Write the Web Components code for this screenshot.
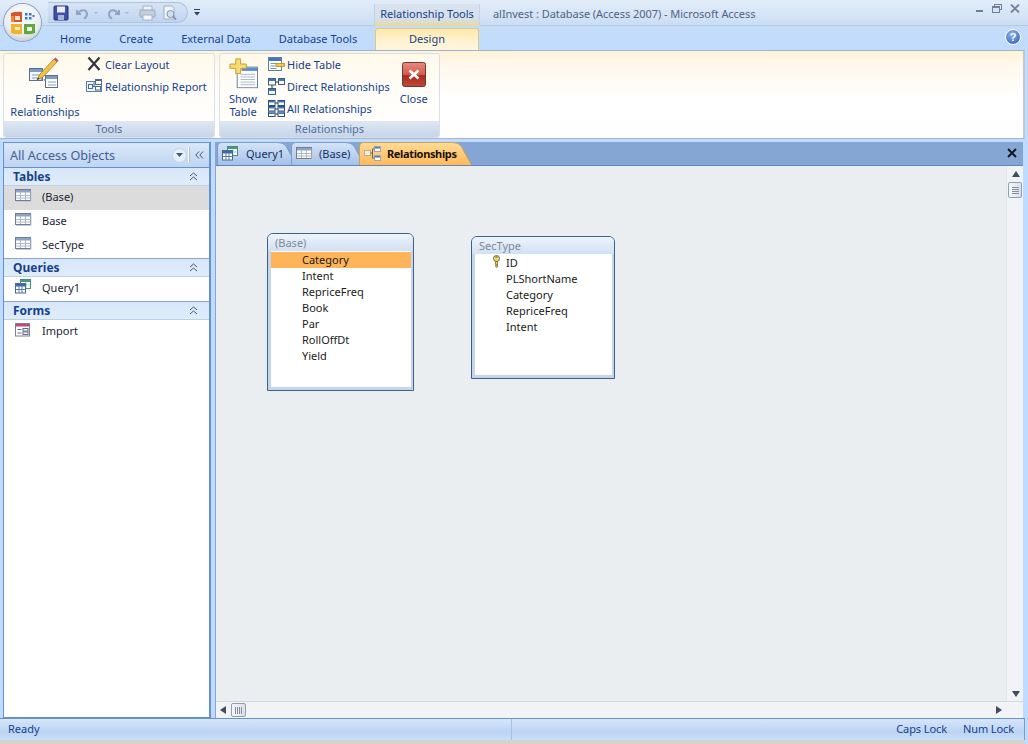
<!DOCTYPE html>
<html>
<head>
<meta charset="utf-8">
<style>
  html, body { margin: 0; height: 100%; overflow: hidden; }
  body { width: 1028px; height: 744px; background: #bfdbff; font: 11px "Noto Sans", "Open Sans", sans-serif; color: #15428b; display: flex; flex-direction: column; }
  .main { flex: 1; display: flex; min-height: 0; padding: 3px 0 0 3px; }
  .col { display: flex; flex-direction: column; margin-top: -1px; }
</style>
</head>
<body>
<access-titlebar></access-titlebar>
<access-tabstrip></access-tabstrip>
<access-ribbon>
  <ribbon-group label="Tools" style="width:212px">
    <ribbon-big icon="edit" style="width:82px">Edit<br>Relationships</ribbon-big>
    <div class="col">
      <ribbon-small icon="clear">Clear Layout</ribbon-small>
      <ribbon-small icon="report">Relationship Report</ribbon-small>
    </div>
  </ribbon-group>
  <ribbon-group label="Relationships" style="width:221px">
    <ribbon-big icon="show" style="width:48px;padding-right:2px">Show<br>Table</ribbon-big>
    <div class="col">
      <ribbon-small icon="hide" style="gap:2px">Hide Table</ribbon-small>
      <ribbon-small icon="direct" style="gap:2px">Direct Relationships</ribbon-small>
      <ribbon-small icon="all" style="gap:2px">All Relationships</ribbon-small>
    </div>
    <ribbon-big icon="close" style="width:48px">Close</ribbon-big>
  </ribbon-group>
</access-ribbon>
<div class="main">
  <nav-pane>
    <nav-group label="Tables">
      <nav-item icon="table" selected>(Base)</nav-item>
      <nav-item icon="table">Base</nav-item>
      <nav-item icon="table">SecType</nav-item>
    </nav-group>
    <nav-group label="Queries">
      <nav-item icon="query">Query1</nav-item>
    </nav-group>
    <nav-group label="Forms">
      <nav-item icon="form">Import</nav-item>
    </nav-group>
  </nav-pane>
  <doc-area>
    <doc-tab slot="tabs" icon="query" w="80" style="gap:8px">Query1</doc-tab>
    <doc-tab slot="tabs" icon="table" w="74">(Base)</doc-tab>
    <doc-tab slot="tabs" icon="rel" active w="113">Relationships</doc-tab>
    <table-box label="(Base)" style="left:51px;top:67px;width:147px;height:158px" selected="Category"
      fields="Category,Intent,RepriceFreq,Book,Par,RollOffDt,Yield"></table-box>
    <table-box label="SecType" style="left:255px;top:70px;width:144px;height:143px" keyfield="ID"
      fields="ID,PLShortName,Category,RepriceFreq,Intent"></table-box>
  </doc-area>
</div>
<access-status></access-status>

<script>
// shared icon drawings, all on a small pixel grid
const ICONS = {
  table: `<svg width="17" height="13" viewBox="0 0 17 13"><rect x=".5" y=".5" width="15" height="11" fill="#fff" stroke="#6d7f96"/><rect x="1" y="1" width="14" height="2.5" fill="#8ea4c4"/><path d="M1 6.5h14M1 9h14M5.5 3v8M10.5 3v8" stroke="#a9b8cc" fill="none"/><path d="M1 12.5h15v-11" stroke="#c4ccd8" fill="none"/></svg>`,
  query: `<svg width="16" height="15" viewBox="0 0 16 15"><rect x="5.5" y=".5" width="10" height="9" fill="#fff" stroke="#4d8a80"/><rect x="6" y="1" width="9" height="2" fill="#3f9a86"/><path d="M11 3v6M7 6h8" stroke="#9db" fill="none"/><rect x=".5" y="4.5" width="10" height="9.5" fill="#fff" stroke="#4a6a94"/><rect x="1" y="5" width="9" height="2.5" fill="#3c6aa8"/><path d="M1 10.5h9M4 7v7M7 7v7" stroke="#5b7cae" fill="none"/></svg>`,
  form: `<svg width="15" height="14" viewBox="0 0 15 14"><rect x=".5" y=".5" width="14" height="12.5" fill="#fff" stroke="#7a7f92"/><rect x="1" y="1" width="13" height="2.5" fill="#c2487e"/><rect x="8" y="5.5" width="5" height="2.5" fill="#fff" stroke="#5a6d88"/><rect x="8" y="9" width="5" height="2.5" fill="#fff" stroke="#5a6d88"/><path d="M2.500 6.500h4M2.500 10h4" stroke="#5a6d88"/></svg>`,
  rel: `<svg width="17" height="15" viewBox="0 0 17 15"><rect x=".5" y="4.500" width="6" height="5" fill="#f4ecd8" stroke="#b9ab8c"/><rect x="10.500" y=".5" width="6" height="5" fill="#fff" stroke="#9aa7b4"/><rect x="10.500" y="9.500" width="6" height="5" fill="#fff" stroke="#9aa7b4"/><rect x="11" y="1" width="5" height="1.500" fill="#59799f"/><rect x="11" y="10" width="5" height="1.500" fill="#59799f"/><path d="M6.500 7h2M8.500 3v9M8.500 3h2M8.500 12h2" stroke="#5b6a70" fill="none"/></svg>`,
  clear: `<svg width="16" height="16" viewBox="0 0 16 16"><path d="M2.500 1.500l11 12.500M13.500 1.500l-11 12.500" stroke="#33373d" stroke-width="2.200" fill="none"/></svg>`,
  report: `<svg width="16" height="14" viewBox="0 0 16 14"><rect x=".5" y="2.500" width="15" height="10" fill="#eef3f9" stroke="#5f7ea6"/><rect x="2.500" y="5.500" width="4" height="4" fill="#fff" stroke="#4a6a94"/><rect x="9.500" y=".5" width="6" height="5" fill="#fff" stroke="#4a6a94"/><rect x="9.500" y="7.500" width="5" height="3.500" fill="#fff" stroke="#4a6a94"/><path d="M10 1.500h5M7 7.500h2.500M8 3v5" stroke="#4a6a94" fill="none"/></svg>`,
  hide: `<svg width="17" height="15" viewBox="0 0 17 15"><rect x=".5" y=".5" width="13" height="13" fill="#fff" stroke="#5f7ea6"/><rect x="1" y="1" width="12" height="3" fill="#3f78c0"/><path d="M2.500 6.500h6M2.500 9h5M2.500 11.500h6" stroke="#7e97b8" fill="none"/><rect x="8" y="6.500" width="8.500" height="3" fill="#f3c64c" stroke="#b68a24" stroke-width=".8"/></svg>`,
  direct: `<svg width="17" height="17" viewBox="0 0 17 17"><rect x=".5" y=".5" width="7" height="6.500" fill="#fff" stroke="#3e5f8e"/><rect x="1" y="1" width="6" height="2" fill="#3f78c0"/><rect x="10.500" y=".5" width="6" height="6" fill="#fff" stroke="#3e5f8e"/><rect x="11" y="1" width="5" height="2" fill="#3f78c0"/><rect x=".5" y="10.500" width="7" height="6" fill="#fff" stroke="#3e5f8e"/><rect x="1" y="11" width="6" height="2" fill="#3f78c0"/><path d="M7.500 4h3M4 7v3.500" stroke="#333"/></svg>`,
  all: `<svg width="17" height="17" viewBox="0 0 17 17"><g fill="#fff" stroke="#2f4f7e"><rect x=".5" y=".5" width="6.500" height="5"/><rect x="10" y=".5" width="6.500" height="5"/><rect x=".5" y="6.500" width="6.500" height="4.500"/><rect x="10" y="6.500" width="6.500" height="4.500"/><rect x=".5" y="12" width="6.500" height="4.500"/><rect x="10" y="12" width="6.500" height="4.500"/></g><g fill="#3f78c0"><rect x="1" y="1" width="5.500" height="1.500"/><rect x="10.500" y="1" width="5.500" height="1.500"/><rect x="1" y="7" width="5.500" height="1.500"/><rect x="10.500" y="7" width="5.500" height="1.500"/><rect x="1" y="12.500" width="5.500" height="1.500"/><rect x="10.500" y="12.500" width="5.500" height="1.500"/></g><path d="M7 3h3M7 9h3M7 14h3" stroke="#333"/></svg>`,
  edit: `<svg width="32" height="32" viewBox="0 0 32 32"><rect x=".5" y="11.500" width="13" height="12" fill="#f2f5f9" stroke="#5b6f8c"/><rect x="1" y="12" width="12" height="3" fill="#7f9cc2"/><path d="M3 18h9M3 21h9" stroke="#8ea0b8"/><rect x="16.500" y="18.500" width="12" height="12" fill="#fff" stroke="#5b6f8c"/><rect x="17" y="19" width="11" height="3" fill="#7f9cc2"/><path d="M19 25h8M19 28h8" stroke="#8ea0b8"/><path d="M8 23l3-6 14-15 3 3-14 15-6 3z" fill="#f0c24a" stroke="#a87c20" stroke-width=".8"/><path d="M25 2l3 3 1.500-1.500-3-3z" fill="#b5506a"/><path d="M8 23l1.200-2.500 1.400 1.300z" fill="#333"/><path d="M14 20l-2 3M15 22l1 2" stroke="#6b7f99" fill="none"/></svg>`,
  show: `<svg width="29" height="31" viewBox="0 0 30 36" preserveAspectRatio="none"><rect x="8.500" y="10.500" width="21" height="24" fill="#fff" stroke="#6d7f96"/><rect x="13" y="11" width="16" height="4" fill="#5c8fd0"/><path d="M12 19h15M12 22h15M12 25h15M12 28h15M12 31h15" stroke="#a5b3c6"/><path d="M7 1h5v6h6v5h-6v6H7v-6H1V7h6z" fill="#f7dc72" stroke="#c39a2a"/></svg>`,
  close: `<svg width="24" height="25" viewBox="0 0 24 25" style="margin-bottom:2px"><defs><linearGradient id="c" x1="0" y1="0" x2="0" y2="1"><stop offset="0" stop-color="#e98a80"/><stop offset=".5" stop-color="#d65a4c"/><stop offset=".55" stop-color="#a82a1e"/><stop offset="1" stop-color="#bf4a3a"/></linearGradient></defs><rect x=".5" y=".5" width="23" height="24" rx="2" fill="url(#c)" stroke="#6e3a36"/><path d="M7.500 8.500l9 8M16.500 8.500l-9 8" stroke="#fff" stroke-width="2.600"/></svg>`,
  key: `<svg width="10" height="13" viewBox="0 0 10 13"><circle cx="4.500" cy="3.500" r="3" fill="#f0d98a" stroke="#7b6a2a"/><path d="M3.500 6.500h2v5.500l-1 .5-1-1v-1h1v-1h-1z" fill="#e6c966" stroke="#7b6a2a" stroke-width=".8"/><rect x="3.500" y="1.500" width="2" height="1" fill="#5e5020"/></svg>`
};

function define(name, css, html, setup) {
  customElements.define(name, class extends HTMLElement {
    constructor() {
      super();
      this.attachShadow({ mode: 'open' });
      this.shadowRoot.innerHTML = `<style>${css}</style>` + (typeof html === 'function' ? html(this) : html);
    }
    connectedCallback() { if (setup) setup(this); }
  });
}

define('access-titlebar', `
  :host { display: flex; height: 26px; flex: none; position: relative; background: linear-gradient(#e3edf9, #d5e4f6 60%, #cbddf3); border-bottom: 1px solid #b0cbeb; box-sizing: border-box; align-items: center; color: #4e6583; font-size: 11px; }
  .orb { position: absolute; left: 4px; top: 4px; width: 37px; height: 37px; border-radius: 50%; background: radial-gradient(circle at 50% 35%, #fff, #e8ecf1 60%, #a3afbf); box-shadow: 0 0 0 1px #8e9fb6; display: flex; align-items: center; justify-content: center; z-index: 2; }
  .qat { margin-left: 48px; height: 21px; width: 140px; border-radius: 0 11px 11px 0; background: linear-gradient(#d7e4f5, #c0d5ef); border: 1px solid #a9c4e5; border-left: 0; display: flex; align-items: center; gap: 0; padding-left: 5px; box-sizing: border-box; }
  .qat svg { display: block; flex: none; }
  .more { margin-left: 5px; }
  .ctx { position: absolute; left: 374px; top: 4px; width: 106px; height: 22px; box-sizing: border-box; text-align: center; line-height: 20px; background: linear-gradient(#d8e3f1, #d6dfe6 70%, #e8d99a); color: #15428b; border-left: 1px solid #c2d3e8; border-right: 1px solid #c2d3e8; }
  .title { position: absolute; left: 493px; top: 6px; white-space: nowrap; letter-spacing: -.05px; }
  .win { position: absolute; right: 8px; top: 4px; display: flex; gap: 8px; align-items: center; }
  `, `
  <div class="orb"><svg width="26" height="26" viewBox="0 0 26 26">
    <path d="M1 3q5-2 11-1v10H1z" fill="#d8562c"/><path d="M14 2q6-1 11 1v9H14z" fill="#eef3fa"/>
    <path d="M1 14h11v10q-6 1-11-1z" fill="#edb42c"/><path d="M14 14h11v9q-5 2-11 1z" fill="#63a83f"/>
    <path d="M5 6h5v4H5z" fill="#f6e3d2"/><path d="M1 6h3v6H1z" fill="#f08a2c"/>
    <g fill="#3f78c0"><rect x="15" y="3" width="2.500" height="2.500"/><rect x="19" y="3" width="2.500" height="2.500"/><rect x="15" y="7" width="2.500" height="2.500"/><rect x="19" y="7" width="2.500" height="2.500"/><rect x="22.500" y="5" width="2" height="2"/></g>
    <path d="M5 17h5v3H5z" fill="#f9e9b8"/><path d="M17 17h5v4h-5z" fill="#eaf4e2"/>
  </svg></div>
  <div class="qat">
    <svg width="16" height="16" viewBox="0 0 16 16"><rect x="1" y="1" width="14" height="14" rx="1" fill="#3c52a8" stroke="#24306e"/><rect x="4" y="1.500" width="8" height="6" fill="#e8edf8"/><rect x="5" y="10" width="6" height="5" fill="#aab6d8"/></svg>
    <svg style="margin-left:6px" width="32" height="14" viewBox="0 0 32 14"><path d="M2 4v4h4M3 7.500c3-5 9-4 9 1 0 2-1 3-3 4" fill="none" stroke="#8ea6c6" stroke-width="2"/><path d="M19 6l2 2 2-2z" fill="#9db2cd"/></svg>
    <svg width="30" height="14" viewBox="0 0 30 14"><path d="M12 4v4H8M11 7.500c-3-5-9-4-9 1 0 2 1 3 3 4" fill="none" stroke="#8ea6c6" stroke-width="2"/><path d="M18 6l2 2 2-2z" fill="#9db2cd"/></svg>
    <svg style="margin-left:2px" width="17" height="16" viewBox="0 0 17 16"><rect x="4" y="1" width="9" height="5" fill="#eef" stroke="#a5b2c4"/><rect x="1" y="5" width="15" height="7" rx="1" fill="#c5cfdc" stroke="#9aa8bb"/><rect x="4" y="10" width="9" height="5" fill="#f4f6fa" stroke="#a5b2c4"/></svg>
    <svg style="margin-left:6px" width="16" height="16" viewBox="0 0 16 16"><path d="M2 1h8l2 2v11H2z" fill="#f0f3f7" stroke="#a4b0c2"/><circle cx="8.500" cy="9" r="3.500" fill="#cfe0f0" stroke="#8096b2"/><path d="M11 11.500l3 3" stroke="#8096b2" stroke-width="2"/></svg>
  </div>
  <svg class="more" width="8" height="9" viewBox="0 0 8 9"><path d="M1 1.500h6" stroke="#2d3f5c"/><path d="M1 4h6L4 7.500z" fill="#2d3f5c"/></svg>
  <div class="ctx">Relationship Tools</div>
  <div class="title">alInvest : Database (Access 2007) - Microsoft Access</div>
  <div class="win">
    <svg width="8" height="8" viewBox="0 0 8 8"><rect y="5" width="7" height="2" fill="#6f8098"/></svg>
    <svg width="10" height="9" viewBox="0 0 10 9"><rect x="2.500" y=".5" width="7" height="5" fill="none" stroke="#6f8098"/><rect x=".5" y="2.500" width="7" height="6" fill="#d8e4f4" stroke="#6f8098"/><rect x="1" y="3" width="6" height="1" fill="#6f8098"/></svg>
    <svg width="10" height="9" viewBox="0 0 10 9"><path d="M1 .5l8 8M9 .5l-8 8" stroke="#6f8098" stroke-width="1.800"/></svg>
  </div>`);

define('access-tabstrip', `
  :host { display: flex; height: 24px; flex: none; background: linear-gradient(#c6dcf7, #bfdbff); box-sizing: border-box; position: relative; font-size: 11px; color: #15428b; padding-left: 46px; }
  .t { padding: 0 14px; line-height: 26px; }
  .d { position: absolute; left: 375px; top: 2px; width: 104px; height: 22px; text-align: center; line-height: 20px; box-sizing: border-box; background: linear-gradient(#fde9ac, #fef3d2 60%, #fff5de); border: 1px solid #dcc88a; border-bottom: 0; border-radius: 3px 3px 0 0; }
  .help { position: absolute; right: 7px; top: 3px; width: 14px; height: 14px; border-radius: 50%; background: radial-gradient(circle at 40% 30%, #8fb4ea, #2a5cb8); border: 1px solid #fff; color: #fff; font: bold 11px/14px "Liberation Sans", sans-serif; text-align: center; }
  `, `<div class="t">Home</div><div class="t">Create</div><div class="t">External Data</div><div class="t">Database Tools</div>
  <div class="d">Design</div><div class="help">?</div>`);

define('access-ribbon', `
  :host { display: flex; height: 89px; flex: none; gap: 4px; padding: 2px 2px 0 3px; margin-right: 3px; box-sizing: border-box; background: linear-gradient(#fff3d6, #fff8ec 15%, #fff 55%, #fefefe); border-top: 1px solid #9db5d2; border-bottom: 1px solid #a9b6c6; border-right: 2px solid #c4c8cc; }
  `, `<slot></slot>`);

define('ribbon-group', `
  :host { display: flex; flex-direction: column; box-sizing: border-box; flex: none; height: 85px; border: 1px solid #d8dfe8; border-radius: 3px; background: linear-gradient(#fff9ea, #fffdf8 40%, #fff); overflow: hidden; }
  .body { flex: 1; display: flex; min-height: 0; }
  .label { height: 16px; line-height: 16px; text-align: center; color: #4f6f9e; background: linear-gradient(#dfe7f3, #c6d5e9); font-size: 11px; }
  `, h => `<div class="body"><slot></slot></div><div class="label">${h.getAttribute('label')}</div>`);

define('ribbon-big', `
  :host { display: flex; flex-direction: column; align-items: center; flex: none; text-align: center; line-height: 13px; color: #15428b; box-sizing: border-box; }
  .i { height: 38px; display: flex; align-items: flex-end; justify-content: center; padding-bottom: 3px; box-sizing: border-box; }
  svg { display: block; }
  `, h => `<div class="i">${ICONS[h.getAttribute('icon')]}</div><div><slot></slot></div>`);

define('ribbon-small', `
  :host { display: flex; align-items: center; height: 22px; gap: 3px; white-space: nowrap; color: #15428b; }
  svg { display: block; }
  `, h => `${ICONS[h.getAttribute('icon')]}<span><slot></slot></span>`);

define('nav-pane', `
  :host { display: flex; flex-direction: column; flex: none; width: 208px; box-sizing: border-box; background: #fff; border: 1px solid #6592cb; border-width: 1px 2px 1px 1px; margin-right: 4px; }
  .head { height: 25px; flex: none; display: flex; align-items: center; box-sizing: border-box; padding-left: 6px; background: linear-gradient(#dbe8f8, #bed5f1); border-bottom: 1px solid #6592cb; color: #3f6193; font-size: 12.6px; }
  .head span { flex: 1; }
  .c { width: 13px; height: 13px; border-radius: 50%; background: #e6eef8; border: 1px solid #c2d2e6; display: flex; align-items: center; justify-content: center; margin-right: 1px; }
  .sep { width: 1px; height: 16px; background: #fff; box-shadow: 1px 0 #a8c0de; margin-right: 6px; }
  .h { margin-right: 5px; display: block; }
  `, `<div class="head"><span>All Access Objects</span><div class="c"><svg width="7" height="4" viewBox="0 0 7 4"><path d="M0 0h7L3.500 4z" fill="#3d5a82"/></svg></div><div class="sep"></div>
  <svg class="h" width="9" height="8" viewBox="0 0 9 8"><path d="M4 .5L.8 4 4 7.500M8 .5L4.800 4 8 7.500" fill="none" stroke="#3d5a82"/></svg></div><slot></slot>`);

define('nav-group', `
  :host { display: block; border-bottom: 1px solid #8ba8c9; }
  :host(:last-child) { border-bottom: 0; }
  .h { height: 17px; display: flex; align-items: center; justify-content: space-between; padding: 0 11px 0 9px; background: linear-gradient(#d7e7fa, #e0ecfa); border-bottom: 1px solid #bcd1e8; color: #15428b; font-weight: bold; font-size: 12px; }
  svg { display: block; }
  `, h => `<div class="h"><span>${h.getAttribute('label')}</span><svg width="9" height="9" viewBox="0 0 9 9"><path d="M1 4l3.500-3L8 4M1 8l3.500-3L8 8" fill="none" stroke="#47587a"/></svg></div><slot></slot>`);

define('nav-item', `
  :host { display: flex; align-items: center; height: 24px; box-sizing: border-box; padding: 0 0 4px 11px; color: #1b2536; font-size: 11px; }
  :host([selected]) { background: #dcdcdc; }
  .i { width: 27px; flex: none; margin-top: -1px; }
  svg { display: block; }
  `, h => `<div class="i">${ICONS[h.getAttribute('icon')]}</div><slot></slot>`);

define('doc-area', `
  :host { flex: 1; display: flex; flex-direction: column; min-width: 0; margin-right: 5px; background: #ebeef1; border-left: 1px solid #8aa5c8; }
  .tabs { height: 24px; flex: none; box-sizing: border-box; display: flex; align-items: flex-end; padding-left: 1px; background: #85a6d2; border-bottom: 1px solid #5f86bd; position: relative; }
  .x { position: absolute; right: 6px; top: 6px; display: block; }
  .view { flex: 1; display: flex; min-height: 0; }
  .canvas { flex: 1; position: relative; }
  .vs { width: 16px; flex: none; position: relative; background: #f1f3f6; border-left: 1px solid #e2e5e9; }
  .hs { height: 16px; flex: none; background: #f1f3f6; border-top: 1px solid #d5d9de; position: relative; }
  .up, .dn, .lf, .rt { position: absolute; width: 0; height: 0; }
  .up { left: 5px; top: 5px; border: 4px solid transparent; border-top: 0; border-bottom: 6px solid #3e4d60; }
  .dn { left: 5px; bottom: 4px; border: 4px solid transparent; border-bottom: 0; border-top: 6px solid #3e4d60; }
  .lf { left: 4px; top: 4px; border: 4px solid transparent; border-left: 0; border-right: 6px solid #3e4d60; }
  .rt { right: 21px; top: 4px; border: 4px solid transparent; border-right: 0; border-left: 6px solid #3e4d60; }
  .th { position: absolute; box-sizing: border-box; border: 1px solid #8f9fb4; border-radius: 2px; background: linear-gradient(90deg, #f6f8fb, #d9e0ea); display: flex; align-items: center; justify-content: center; }
  .v { left: 1px; top: 16px; width: 14px; height: 16px; }
  .g { left: 15px; top: 1px; width: 15px; height: 14px; }
  `, `<div class="tabs"><slot name="tabs"></slot>
    <svg class="x" width="10" height="10" viewBox="0 0 10 10"><path d="M1 1l8 8M9 1l-8 8" stroke="#0d1420" stroke-width="1.800"/></svg></div>
  <div class="view"><div class="canvas"><slot></slot></div>
    <div class="vs"><div class="up"></div><div class="th v"><svg width="9" height="9" viewBox="0 0 9 9"><path d="M1 1.500h7M1 3.500h7M1 5.500h7M1 7.500h7" stroke="#8390a2"/></svg></div><div class="dn"></div></div></div>
  <div class="hs"><div class="lf"></div><div class="th g"><svg width="9" height="9" viewBox="0 0 9 9"><path d="M1.500 1v7M3.500 1v7M5.500 1v7M7.500 1v7" stroke="#8390a2"/></svg></div><div class="rt"></div></div>`);

// tab outline has a slanted right edge, so it is a stretched svg behind the label
define('doc-tab', `
  :host { display: flex; align-items: center; height: 23px; box-sizing: border-box; position: relative; z-index: 0; padding: 0 0 0 5px; gap: 6px; flex: none; margin-right: -6px; white-space: nowrap; color: #15315f; font-size: 11px; }
  :host([active]) { color: #1a1000; font-weight: bold; letter-spacing: -.35px; }
  .bg { position: absolute; left: 0; top: 0; z-index: -1; }
  svg { display: block; }
  `, h => {
    const w = +h.getAttribute('w');
    const on = h.hasAttribute('active');
    h.style.width = w + 'px';
    return `<svg class="bg" width="${w}" height="23"><defs><linearGradient id="g" x1="0" y1="0" x2="0" y2="1">
      <stop offset="0" stop-color="${on ? '#ffdc98' : '#d6e4f6'}"/><stop offset="1" stop-color="${on ? '#ffb95a' : '#a4c1ea'}"/></linearGradient></defs>
      <path d="M.5 23V5Q.5 .5 5 .5H${w - 19}Q${w - 14} .5 ${w - 11} 4L${w - .5} 23" fill="url(#g)" stroke="${on ? '#c9a25e' : '#7d9cc6'}"/></svg>
      ${ICONS[h.getAttribute('icon')]}<slot></slot>`;
  });

define('table-box', `
  :host { position: absolute; display: flex; flex-direction: column; box-sizing: border-box; border: 1px solid #3f5f8c; border-radius: 6px 6px 0 0; background: #c5d6ec; padding: 0 2px 3px 3px; }
  .h { height: 17px; margin: 0 -2px 0 -3px; padding-left: 7px; line-height: 17px; color: #7d8896; font-size: 11px; flex: none; background: linear-gradient(#eef4fc, #d0e0f4); border-radius: 5px 5px 0 0; }
  .b { flex: 1; background: #fff; padding-top: 1px; }
  .f { height: 16px; line-height: 16px; color: #1b1b1b; font-size: 11px; padding-left: 31px; position: relative; }
  .f.sel { background: #ffb45a; }
  .k { position: absolute; left: 17px; top: 0; }
  `, h => {
    const sel = h.getAttribute('selected');
    const key = h.getAttribute('keyfield');
    const rows = h.getAttribute('fields').split(',').map(f =>
      `<div class="f${f === sel ? ' sel' : ''}">${f === key ? `<span class="k">${ICONS.key}</span>` : ''}${f}</div>`).join('');
    return `<div class="h">${h.getAttribute('label')}</div><div class="b">${rows}</div>`;
  });

define('access-status', `
  :host { display: flex; height: 26px; flex: none; box-sizing: border-box; border-top: 1px solid #6592cb; border-bottom: 4px solid #d4d4cc; padding: 0 0 3px 8px; background: linear-gradient(#d7e6f9, #bcd4f3 60%, #cbdef6); margin-right: 3px; align-items: center; color: #15428b; font-size: 11px; position: relative; }
  .r { margin-left: auto; display: flex; gap: 16px; padding-right: 11px; letter-spacing: -.1px; }
  .s { position: absolute; left: 511px; top: 0; bottom: 0; width: 1px; background: #a5c0e2; }
  .e { position: absolute; right: 0; top: 0; bottom: 0; width: 1px; background: #7e9cc4; }
  `, `<span>Ready</span><div class="s"></div><div class="r"><span>Caps Lock</span><span>Num Lock</span></div><div class="e"></div>`);
</script>
</body>
</html>
